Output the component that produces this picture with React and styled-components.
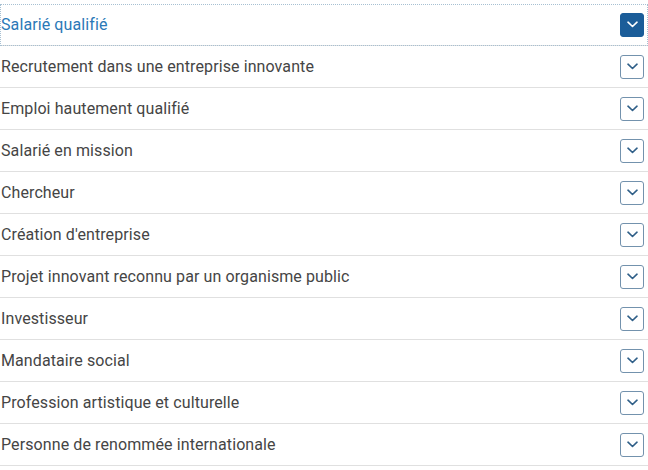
import styled, { createGlobalStyle } from "styled-components";

const GlobalStyle = createGlobalStyle`
  body {
    margin: 0;
    background: #ffffff;
    font-family: Roboto, "Liberation Sans", sans-serif;
  }
`

const List = styled.ul`
  list-style: none;
  margin: 0;
  padding: 4px 0 0 0;
  width: 648px;
`

const Item = styled.li`
  display: flex;
  align-items: center;
  justify-content: space-between;
  height: 41px;
  border-bottom: 1px solid #e0e0e0;
  padding: 0 4px 0 1px;
  box-sizing: content-box;
  width: 643px;
  outline: ${p => (p.open ? "1px dotted #a7c0d2" : "none")};
  outline-offset: -1px;
`

const Label = styled.span`
  font-size: 16px;
  letter-spacing: 0.1px;
  color: ${p => (p.open ? "#2b79b7" : "#454545")};
`

const Toggle = styled.button`
  width: 24px;
  height: 24px;
  padding: 0;
  display: flex;
  align-items: center;
  justify-content: center;
  border-radius: 3px;
  border: 1px solid ${p => (p.open ? "#1b5d99" : "#7392ad")};
  background: ${p => (p.open ? "#1b5d99" : "#ffffff")};
  color: ${p => (p.open ? "#ffffff" : "#2f5f88")};
  cursor: pointer;
`

const Chevron = () => (
  <svg width="11" height="7" viewBox="0 0 11 7" fill="none">
    <path d="M1 1.2 L5.5 5.5 L10 1.2" stroke="currentColor" strokeWidth="1.6" strokeLinecap="round" strokeLinejoin="round" />
  </svg>
)

const items = [
  "Salarié qualifié",
  "Recrutement dans une entreprise innovante",
  "Emploi hautement qualifié",
  "Salarié en mission",
  "Chercheur",
  "Création d'entreprise",
  "Projet innovant reconnu par un organisme public",
  "Investisseur",
  "Mandataire social",
  "Profession artistique et culturelle",
  "Personne de renommée internationale",
]

export default function App() {
  return (
    <>
      <GlobalStyle />
      <List>
        {items.map((label, i) => (
          <Item key={label} open={i === 0}>
            <Label open={i === 0}>{label}</Label>
            <Toggle open={i === 0} aria-label="Ouvrir">
              <Chevron />
            </Toggle>
          </Item>
        ))}
      </List>
    </>
  )
}
